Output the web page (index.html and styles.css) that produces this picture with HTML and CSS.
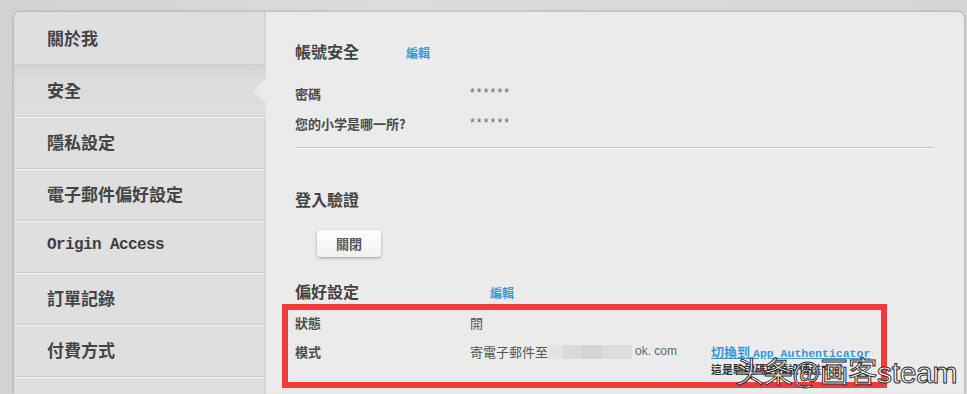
FILE: index.html
```html
<!DOCTYPE html>
<html lang="zh-Hant">
<head>
<meta charset="UTF-8">
<meta name="viewport" content="width=device-width, initial-scale=1.0">
<title>帳號設定 - 安全</title>
<link rel="stylesheet" href="styles.css">
</head>
<body>

<div class="page">
    <div class="panel">
        <!-- Sidebar -->
        <nav class="side">
            <a class="side-item" href="#">關於我</a>
            <a class="side-item is-active" href="#">安全</a>
            <a class="side-item" href="#">隱私設定</a>
            <a class="side-item" href="#">電子郵件偏好設定</a>
            <a class="side-item side-item--latin" href="#">Origin Access</a>
            <a class="side-item" href="#">訂單記錄</a>
            <a class="side-item" href="#">付費方式</a>
            <a class="side-item" href="#"></a>
        </nav>

        <!-- Content -->
        <main class="content">
            <div class="section-head">
                <h2>帳號安全</h2>
                <a class="edit" href="#">編輯</a>
            </div>
            <div class="row">
                <span class="label">密碼</span>
                <span class="value mask">******</span>
            </div>
            <div class="row">
                <span class="label">您的小学是哪一所?</span>
                <span class="value mask">******</span>
            </div>

            <hr class="divider">

            <h2 class="section-title">登入驗證</h2>
            <button class="btn" type="button">關閉</button>

            <div class="section-head section-head--wide">
                <h2>偏好設定</h2>
                <a class="edit" href="#">編輯</a>
            </div>
            <div class="prefs">
                <div class="row">
                    <span class="label">狀態</span>
                    <span class="value">開</span>
                </div>
                <div class="row row--mode">
                    <span class="label">模式</span>
                    <span class="value">寄電子郵件至<span class="blur"></span><span class="latin">ok. com</span></span>
                    <span class="switch">
                        <a class="switch-link" href="#">切換到 <span class="latin">App Authenticator</span></a>
                        <span class="switch-note">這是驗證碼的預設傳送方式</span>
                    </span>
                </div>
                <div class="mark"></div>
            </div>
        </main>
    </div>

    <div class="watermark">头条@画客<span class="watermark-latin">steam</span></div>
</div>

</body>
</html>
```

FILE: styles.css
```css
/* Basic Reset */
body {
    margin: 0;
    padding: 0;
    font-family: "Noto Sans CJK TC", "Noto Sans CJK SC", sans-serif;
    background: linear-gradient(90deg, #d2d2d2, #dcdcdc 40%, #d6d6d6);
    color: #444;
    font-size: 13px;
    overflow: hidden;
}

.page {
    position: relative;
    height: 394px;
    padding: 12px 3px 0 14px;
    box-sizing: border-box;
}

/* Panel */
.panel {
    display: flex;
    height: 382px;
    background: #ebebeb;
    border-radius: 6px 6px 0 0;
    box-shadow: 0 0 3px rgba(0, 0, 0, 0.35);
    overflow: hidden;
}

/* Sidebar */
.side {
    width: 251px;
    flex: none;
    padding-top: 1px;
    background: #dfdfdf;
    box-shadow: inset -1px 0 0 #d0d0d0;
}

.side-item {
    display: flex;
    align-items: center;
    height: 52px;
    box-sizing: border-box;
    padding-left: 33px;
    padding-bottom: 3px;
    border-bottom: 1px solid #cdcdcd;
    box-shadow: 0 1px 0 #f6f6f6;
    font-size: 17px;
    font-weight: bold;
    color: #444;
    text-decoration: none;
    position: relative;
}

.side-item--latin {
    font-family: "Liberation Mono", monospace;
    font-size: 16px;
    letter-spacing: -0.6px;
    color: #3e3e3e;
}

.side-item.is-active {
    background: linear-gradient(#d3d3d3, #dcdcdc 30%, #dedede);
}

/* little arrow pointing at the active item */
.side-item.is-active::after {
    content: "";
    position: absolute;
    right: -1px;
    top: 14px;
    border-top: 12px solid transparent;
    border-bottom: 12px solid transparent;
    border-right: 13px solid #ebebeb;
}

/* Content */
.content {
    flex: 1;
    padding: 29px 30px 0 30px;
    box-shadow: inset 1px 0 1px rgba(0, 0, 0, 0.06);
}

h2 {
    margin: 0;
    font-size: 16px;
    line-height: 20px;
    font-weight: bold;
    color: #444;
}

.section-head {
    display: flex;
    align-items: center;
    gap: 47px;
    height: 20px;
}

.section-head--wide {
    gap: 131px;
    margin-top: 24px;
}

.edit {
    font-size: 12px;
    font-weight: bold;
    color: #3a98d4;
    text-decoration: none;
    padding-top: 2px;
}

.row {
    display: flex;
    align-items: center;
    height: 30px;
}

.section-head + .row {
    margin-top: 17px;
}

.label {
    width: 175px;
    flex: none;
    font-weight: bold;
    color: #4a4a4a;
}

.value {
    color: #555;
    display: flex;
    align-items: center;
}

.mask {
    font-family: "Liberation Sans", sans-serif;
    font-size: 12px;
    letter-spacing: 2.2px;
    color: #666;
}

.divider {
    margin: 9px 0 0;
    border: none;
    border-top: 1px solid #c6c6c6;
    box-shadow: 0 1px 0 #f7f7f7;
}

.section-title {
    margin-top: 41px;
}

/* Button */
.btn {
    display: block;
    margin: 21px 0 0 22px;
    width: 64px;
    height: 27px;
    border: none;
    border-radius: 4px;
    background: linear-gradient(#ffffff, #f1f1f1);
    box-shadow: 0 1px 3px rgba(0, 0, 0, 0.35);
    font-family: inherit;
    font-size: 13px;
    font-weight: bold;
    color: #555;
    cursor: pointer;
}

/* Preferences */
.prefs {
    position: relative;
    margin-top: 6px;
    height: 74px;
}

.row--mode {
    align-items: flex-start;
    padding-top: 6px;
    box-sizing: border-box;
}

.row--mode .label,
.row--mode .value {
    line-height: 17px;
}

.blur {
    display: inline-block;
    width: 84px;
    height: 14px;
    margin: 0 3px 0 0;
    background: linear-gradient(90deg, #e4e4e4 0, #e4e4e4 14px, #dadada 14px, #dadada 34px, #d3d3d3 34px, #d3d3d3 54px, #dcdcdc 54px);
}

.latin {
    font-family: "Liberation Mono", monospace;
    font-size: 11.5px;
}

.value .latin {
    font-family: "Liberation Sans", sans-serif;
    font-size: 12px;
    color: #666;
}

.switch {
    display: flex;
    flex-direction: column;
    margin-left: 34px;
}

.switch-link {
    font-size: 13px;
    font-weight: bold;
    line-height: 17px;
    color: #3a98d4;
    text-decoration: underline;
    text-underline-offset: 1px;
}

.switch-note {
    font-size: 11px;
    line-height: 14px;
    font-weight: bold;
    color: #333;
}

/* red annotation frame */
.mark {
    position: absolute;
    left: -13px;
    top: -3px;
    width: 605px;
    height: 84px;
    box-sizing: border-box;
    border: 6px solid #f13a3a;
}

/* Watermark */
.watermark {
    position: absolute;
    left: 735px;
    top: 352px;
    font-family: "Noto Sans CJK SC", sans-serif;
    font-size: 29px;
    line-height: 36px;
    color: #ffffff;
    -webkit-text-stroke: 1px #2a2a2a;
    letter-spacing: -0.3px;
    white-space: nowrap;
}

.watermark-latin {
    font-family: "Liberation Sans", sans-serif;
    font-size: 30px;
}
```
